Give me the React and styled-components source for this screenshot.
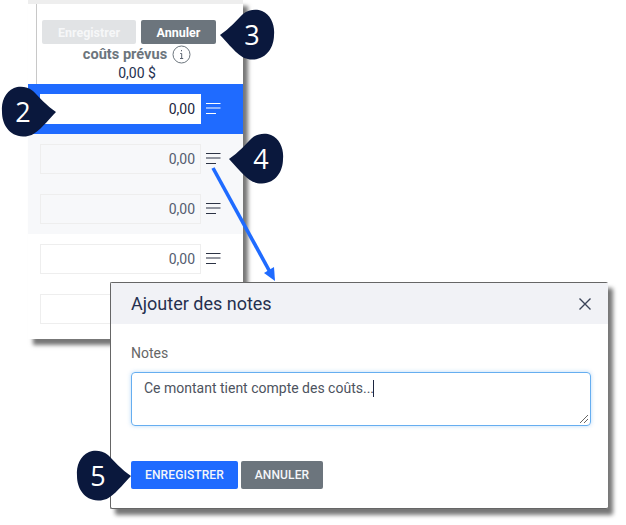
import React from "react";
import styled, { createGlobalStyle } from "styled-components";

const GlobalStyle = createGlobalStyle`
  html, body {
    margin: 0;
    padding: 0;
    background: #fff;
    font-family: Roboto, "Liberation Sans", sans-serif;
  }
`;

const Page = styled.div`
  position: relative;
  width: 626px;
  height: 525px;
  overflow: hidden;
  background: #fff;
`;

const Panel = styled.div`
  width: 215px;
  margin-left: 28px;
  padding-bottom: 5px;
  background: #fff;
  box-shadow: 5px 6px 4px #777;
`;

const TopStrip = styled.div`
  height: 4px;
  background: #eeeeee;
`;

const Head = styled.div`
  height: 80px;
  box-sizing: border-box;
  margin-left: 8px;
  padding: 16px 0 0 5px;
  border-left: 1px solid #c8c8c8;
`;

const HeadButtons = styled.div`
  display: flex;
  gap: 5px;
`;

const SmallButton = styled.div`
  display: flex;
  align-items: center;
  justify-content: center;
  width: ${(p) => p.$w}px;
  height: 24px;
  border-radius: 2px;
  background: ${(p) => (p.$disabled ? "#e1e3e5" : "#6c757d")};
  color: ${(p) => (p.$disabled ? "#f6f7f8" : "#fff")};
  font-size: 12.5px;
  font-weight: 700;
`;

const Cost = styled.div`
  width: 190px;
  text-align: center;
`;

const CostTitle = styled.div`
  display: flex;
  align-items: center;
  justify-content: center;
  gap: 5px;
  height: 20px;
  color: #6c757d;
  font-size: 14.6px;
  font-weight: 700;
`;

const CostValue = styled.div`
  color: #25304f;
  font-size: 14px;
  line-height: 18px;
`;

const Row = styled.div`
  display: flex;
  align-items: center;
  gap: 4px;
  height: 50px;
  padding-left: 12px;
  background: ${(p) =>
    p.$active ? "#1f6bff" : p.$shaded ? "#f7f8fa" : "#fff"};
`;

const Amount = styled.div`
  box-sizing: border-box;
  width: 161px;
  height: 30px;
  padding-right: 5px;
  border: 1px solid ${(p) => (p.$active ? "#fff" : "#eeeeee")};
  background: ${(p) => (p.$active ? "#fff" : "transparent")};
  color: ${(p) => (p.$active ? "#1c2540" : "#555d70")};
  font-size: 14px;
  line-height: 28px;
  text-align: right;
`;

const NotesIcon = ({ color }) => (
  <svg width="16" height="12" viewBox="0 0 16 12" fill="none" stroke={color} strokeWidth="1.1">
    <path d="M1 1.500h14.500M1 6h14.500M1 11.500h10" />
  </svg>
);

const IconSlot = styled.div`
  display: flex;
  width: 16px;
  margin-top: -3px;
`;

const Modal = styled.div`
  position: absolute;
  left: 110px;
  top: 282px;
  width: 498px;
  height: 227px;
  box-sizing: border-box;
  border: 1px solid #666;
  border-width: 1px 0 1px 1px;
  border-radius: 2px;
  background: #fff;
  box-shadow: 5px 6px 4px #777;
`;

const ModalHeader = styled.div`
  display: flex;
  align-items: center;
  justify-content: space-between;
  height: 41px;
  padding: 0 15px 0 20px;
  background: #f1f2f6;
  color: #25304f;
  font-size: 18px;
`;

const CloseButton = styled.div`
  display: flex;
  color: #3a4358;
`;

const ModalBody = styled.div`
  padding: 21px 17px 0 20px;
`;

const FieldLabel = styled.div`
  color: #666;
  font-size: 14px;
  line-height: 17px;
`;

const NoteBox = styled.div`
  position: relative;
  box-sizing: border-box;
  height: 54px;
  margin-top: 10px;
  padding: 5px 12px;
  border: 1px solid #66aef0;
  border-radius: 4px;
  box-shadow: 0 0 4px rgba(102, 174, 240, 0.45);
  color: #4d5360;
  font-size: 14px;
  line-height: 20px;
`;

const Caret = styled.span`
  display: inline-block;
  width: 1px;
  height: 17px;
  margin-left: -1px;
  vertical-align: -4px;
  background: #1c2540;
`;

const Grip = styled.svg`
  position: absolute;
  right: 1px;
  bottom: 1px;
`;

const ModalActions = styled.div`
  display: flex;
  gap: 3px;
  margin-top: 35px;
`;

const ActionButton = styled.div`
  display: flex;
  align-items: center;
  justify-content: center;
  width: ${(p) => p.$w}px;
  height: 28px;
  border-radius: 2px;
  background: ${(p) => (p.$primary ? "#1f6bff" : "#6c757d")};
  color: #f4f6fa;
  font-size: 12px;
  font-weight: 500;
  letter-spacing: 0.1px;
`;

const Callout = styled.div`
  position: absolute;
  left: ${(p) => p.$x}px;
  top: ${(p) => p.$y}px;
  width: 56px;
  height: 52px;
`;

const CalloutNumber = styled.span`
  position: absolute;
  top: 0;
  bottom: 0;
  left: ${(p) => (p.$tip === "left" ? 5 : -6)}px;
  width: 56px;
  color: #fff;
  font-family: "Open Sans", "Liberation Sans", sans-serif;
  font-size: 27px;
  line-height: 52px;
  text-align: center;
`;

const Drawing = styled.svg`
  position: absolute;
  left: 0;
  top: 0;
  pointer-events: none;
`;

const Marker = ({ n, x, y, tip }) => (
  <Callout $x={x} $y={y}>
    <svg width="56" height="52" viewBox="0 0 56 52">
      {tip === "left" ? (
        <path d="M1 26 C10 20 19 10 24 5 C30 0 38 0 43 2 C52 6 56 16 55 26 C55 38 48 50 34 50.500 C22 51 16 42 1 26Z" fill="#0a183d" />
      ) : (
        <path d="M55 26 C46 20 37 10 32 5 C26 0 18 0 13 2 C4 6 0 16 1 26 C1 38 8 50 22 50.500 C34 51 40 42 55 26Z" fill="#0a183d" />
      )}
    </svg>
    <CalloutNumber $tip={tip}>{n}</CalloutNumber>
  </Callout>
);

const rows = [
  { active: true },
  { shaded: true },
  { shaded: true },
  {},
  { hidden: true },
];

export default function App() {
  return (
    <Page>
      <GlobalStyle />
      <Panel>
        <TopStrip />
        <Head>
          <HeadButtons>
            <SmallButton $w={94} $disabled>Enregistrer</SmallButton>
            <SmallButton $w={75}>Annuler</SmallButton>
          </HeadButtons>
          <Cost>
            <CostTitle>
              coûts prévus
              <svg width="19" height="19" viewBox="0 0 19 19" fill="none">
                <circle cx="9.500" cy="9.500" r="8.500" stroke="#6c757d" />
                <path d="M9.500 5v1.300M8.200 8.500h1.500v5M8 13.500h3.200" stroke="#5c6470" />
              </svg>
            </CostTitle>
            <CostValue>0,00 $</CostValue>
          </Cost>
        </Head>
        {rows.map((r, i) => (
          <Row key={i} $active={r.active} $shaded={r.shaded}>
            <Amount $active={r.active}>{r.hidden ? "" : "0,00"}</Amount>
            {!r.hidden && (
              <IconSlot>
                <NotesIcon color={r.active ? "#fff" : "#2c3345"} />
              </IconSlot>
            )}
          </Row>
        ))}
      </Panel>

      <Drawing width="626" height="525" viewBox="0 0 626 525">
        <path d="M213 168 L270 272" stroke="#1f6bff" strokeWidth="3.600" />
        <path d="M275 281 L264 273 L274 267Z" fill="#1f6bff" />
      </Drawing>

      <Modal>
        <ModalHeader>
          Ajouter des notes
          <CloseButton>
            <svg width="16" height="16" viewBox="0 0 16 16" fill="none" stroke="currentColor" strokeWidth="1.4">
              <path d="M2.500 2.500l11 11M13.500 2.500l-11 11" />
            </svg>
          </CloseButton>
        </ModalHeader>
        <ModalBody>
          <FieldLabel>Notes</FieldLabel>
          <NoteBox>
            Ce montant tient compte des coûts...<Caret />
            <Grip width="10" height="10" viewBox="0 0 10 10" stroke="#666" fill="none">
              <path d="M1 9L9 1M5 9L9 5" />
            </Grip>
          </NoteBox>
          <ModalActions>
            <ActionButton $w={107} $primary>ENREGISTRER</ActionButton>
            <ActionButton $w={82}>ANNULER</ActionButton>
          </ModalActions>
        </ModalBody>
      </Modal>

      <Marker n="2" x={1} y={86} tip="right" />
      <Marker n="3" x={219} y={9} tip="left" />
      <Marker n="4" x={228} y={133} tip="left" />
      <Marker n="5" x={76} y={450} tip="right" />
    </Page>
  );
}
